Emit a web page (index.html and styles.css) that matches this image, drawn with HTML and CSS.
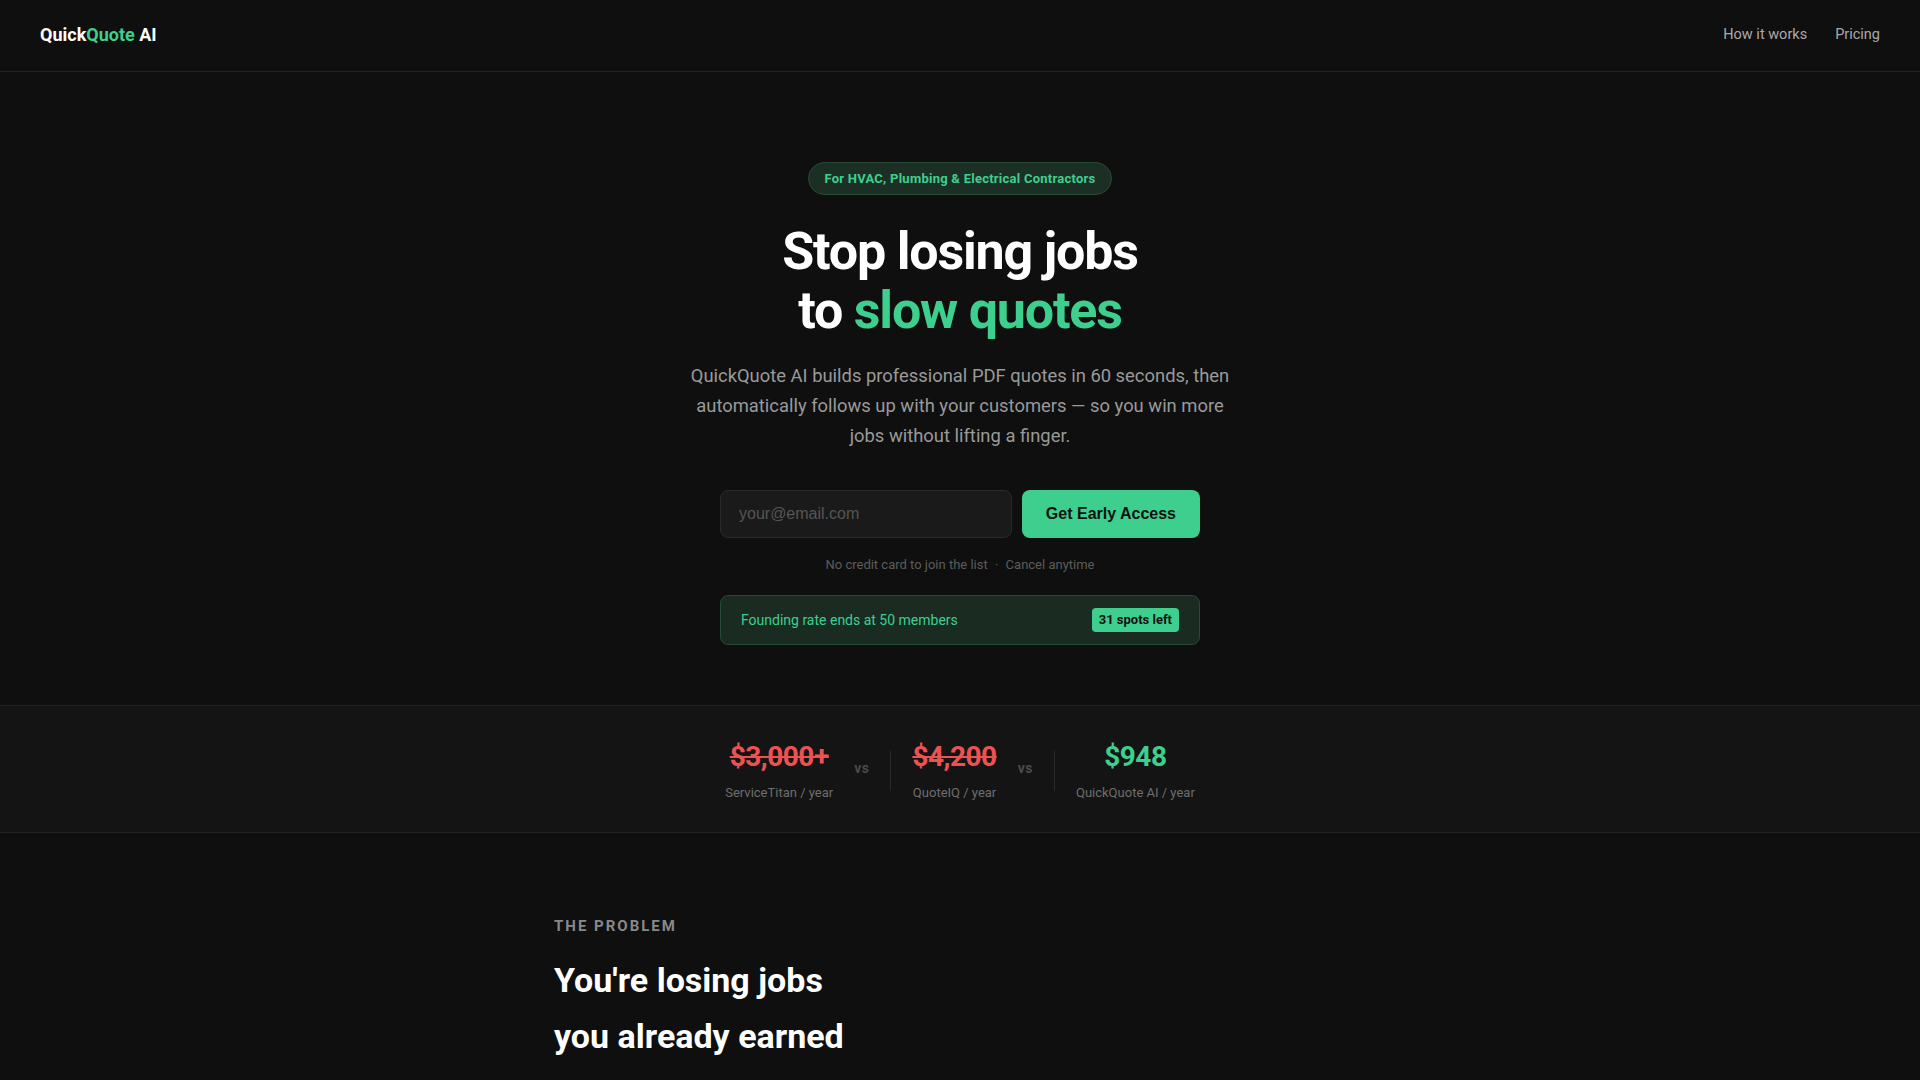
FILE: index.html
```html
<!DOCTYPE html>
<html lang="en">
<head>
<meta charset="utf-8">
<title>QuickQuote AI</title>
<link rel="stylesheet" href="styles.css">
</head>
<body>
<nav class="nav">
  <div class="logo">Quick<span class="accent">Quote</span> AI</div>
  <div class="nav-links">
    <a href="#how">How it works</a>
    <a href="#pricing">Pricing</a>
  </div>
</nav>

<section class="hero">
  <div class="badge">For HVAC, Plumbing &amp; Electrical Contractors</div>
  <h1 class="hero-title">Stop losing jobs<br>to <span class="accent">slow quotes</span></h1>
  <p class="hero-sub">QuickQuote AI builds professional PDF quotes in 60 seconds, then automatically follows up with your customers — so you win more jobs without lifting a finger.</p>
  <form class="signup" onsubmit="return false">
    <input class="signup-input" type="email" placeholder="your@email.com">
    <button class="signup-btn" type="submit">Get Early Access</button>
  </form>
  <div class="note">No credit card to join the list <span class="dot">·</span> Cancel anytime</div>
  <div class="founding">
    <span class="founding-text">Founding rate ends at 50 members</span>
    <span class="spots">31 spots left</span>
  </div>
</section>

<section class="stats">
  <div class="stat">
    <div class="price strike">$3,000+</div>
    <div class="stat-label">ServiceTitan / year</div>
  </div>
  <div class="vs">vs</div>
  <div class="divider"></div>
  <div class="stat">
    <div class="price strike">$4,200</div>
    <div class="stat-label">QuoteIQ / year</div>
  </div>
  <div class="vs">vs</div>
  <div class="divider"></div>
  <div class="stat">
    <div class="price good">$948</div>
    <div class="stat-label">QuickQuote AI / year</div>
  </div>
</section>

<section class="problem">
  <div class="container">
    <div class="eyebrow">The Problem</div>
    <h2 class="section-title">You're losing jobs<br>you already earned</h2>
  </div>
</section>
</body>
</html>
```

FILE: styles.css
```css
* { box-sizing: border-box; }

html, body {
  margin: 0;
  padding: 0;
  background: #0f0f0f;
  color: #fff;
  font-family: Roboto, "Liberation Sans", Arial, sans-serif;
}

.accent { color: #3ecf8e; }

.nav {
  height: 72px;
  padding: 0 40px 2px;
  display: flex;
  align-items: center;
  justify-content: space-between;
  border-bottom: 1px solid #222;
}

.logo {
  font-size: 18px;
  font-weight: 700;
  color: #fff;
}

.nav-links {
  display: flex;
  gap: 28px;
}

.nav-links a {
  color: #aaa;
  text-decoration: none;
  font-size: 14.5px;
}

.hero {
  padding: 90px 24px 60px;
  display: flex;
  flex-direction: column;
  align-items: center;
  text-align: center;
}

.badge {
  height: 33px;
  padding: 0 15px;
  display: flex;
  align-items: center;
  border-radius: 999px;
  background: #1c2f25;
  border: 1px solid #284a37;
  color: #3ecf8e;
  font-size: 13px;
  font-weight: 700;
  letter-spacing: 0.25px;
}

.hero-title {
  margin: 28px 0 0;
  font-size: 52px;
  line-height: 1.13;
  font-weight: 700;
  letter-spacing: -1.2px;
}

.hero-sub {
  margin: 20px 0 0;
  max-width: 548px;
  font-size: 18.4px;
  line-height: 1.65;
  color: #9a9a9a;
}

.signup {
  margin-top: 38px;
  display: flex;
  gap: 10px;
  width: 480px;
}

.signup-input {
  flex: 1;
  height: 48px;
  padding: 0 18px;
  background: #1a1a1a;
  border: 1px solid #2a2a2a;
  border-radius: 8px;
  color: #fff;
  font-family: "Liberation Sans", Arial, sans-serif;
  font-size: 16px;
  outline: none;
}

.signup-input::placeholder { color: #555; }

.signup-btn {
  height: 48px;
  padding: 0 24px;
  border: none;
  border-radius: 8px;
  background: #3ecf8e;
  color: #111;
  font-family: "Liberation Sans", Arial, sans-serif;
  font-size: 16px;
  font-weight: 700;
}

.note {
  margin-top: 17px;
  font-size: 13px;
  line-height: 20px;
  color: #5c5c5c;
}

.note .dot { margin: 0 4px; }

.founding {
  margin-top: 20px;
  width: 480px;
  height: 50px;
  padding: 0 20px;
  display: flex;
  align-items: center;
  justify-content: space-between;
  background: #1a2b22;
  border: 1px solid #284a35;
  border-radius: 8px;
}

.founding-text {
  color: #3ecf8e;
  font-size: 14px;
}

.spots {
  background: #3ecf8e;
  color: #111;
  font-size: 13px;
  font-weight: 700;
  padding: 0 7px;
  height: 24px;
  line-height: 24px;
  border-radius: 4px;
}

.stats {
  background: #141414;
  border-top: 1px solid #222;
  border-bottom: 1px solid #222;
  padding: 34px 0 29px;
  display: flex;
  justify-content: center;
  align-items: center;
  gap: 21px;
}

.stat {
  display: flex;
  flex-direction: column;
  align-items: center;
}

.price {
  font-size: 28px;
  line-height: 1.2;
  font-weight: 700;
  letter-spacing: -0.5px;
}

.price.strike {
  color: #ec5252;
  text-decoration: line-through;
}

.price.good { color: #3ecf8e; }

.stat-label {
  margin-top: 10px;
  font-size: 13px;
  line-height: 20px;
  color: #6e6e6e;
}

.vs {
  margin-bottom: 6px;
  font-size: 14px;
  font-weight: 700;
  color: #4a4a4a;
  letter-spacing: 0.5px;
}

.divider {
  width: 1px;
  height: 40px;
  background: #2a2a2a;
}

.problem {
  padding: 81px 24px 0;
}

.container {
  width: 812px;
  margin: 0 auto;
}

.eyebrow {
  font-size: 15px;
  line-height: 24px;
  font-weight: 700;
  letter-spacing: 2px;
  text-transform: uppercase;
  color: #888;
}

.section-title {
  margin: 14px 0 0;
  font-size: 34px;
  line-height: 56px;
  font-weight: 700;
}
```
